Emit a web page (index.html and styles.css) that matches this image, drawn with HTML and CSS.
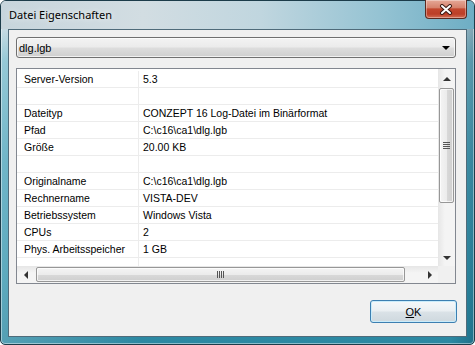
FILE: index.html
```html
<!DOCTYPE html>
<html lang="de">
<head>
  <meta charset="UTF-8">
  <title>Datei Eigenschaften</title>
  <link rel="stylesheet" href="styles.css">
</head>
<body>
  <div class="window">
    <div class="titlebar">
      <span class="title">Datei Eigenschaften</span>
      <button class="close-btn" aria-label="Schließen">
        <svg width="16" height="11" viewBox="0 0 16 11">
          <path d="M4 2 L12 9 M12 2 L4 9" stroke="#3b1a14" stroke-width="4" stroke-linecap="round"/>
          <path d="M4 2 L12 9 M12 2 L4 9" stroke="#fff" stroke-width="2" stroke-linecap="round"/>
        </svg>
      </button>
    </div>

    <div class="client">
      <!-- Auswahl der Datei -->
      <div class="combo">
        <span class="combo-text">dlg.lgb</span>
        <span class="combo-arrow"></span>
      </div>

      <!-- Eigenschaftsliste -->
      <div class="list">
        <div class="rows">
          <div class="row"><div class="cell-label">Server-Version</div><div class="cell-value">5.3</div></div>
          <div class="row"><div class="cell-label"></div><div class="cell-value"></div></div>
          <div class="row"><div class="cell-label">Dateityp</div><div class="cell-value">CONZEPT 16 Log-Datei im Binärformat</div></div>
          <div class="row"><div class="cell-label">Pfad</div><div class="cell-value">C:\c16\ca1\dlg.lgb</div></div>
          <div class="row"><div class="cell-label">Größe</div><div class="cell-value">20.00 KB</div></div>
          <div class="row"><div class="cell-label"></div><div class="cell-value"></div></div>
          <div class="row"><div class="cell-label">Originalname</div><div class="cell-value">C:\c16\ca1\dlg.lgb</div></div>
          <div class="row"><div class="cell-label">Rechnername</div><div class="cell-value">VISTA-DEV</div></div>
          <div class="row"><div class="cell-label">Betriebssystem</div><div class="cell-value">Windows Vista</div></div>
          <div class="row"><div class="cell-label">CPUs</div><div class="cell-value">2</div></div>
          <div class="row"><div class="cell-label">Phys. Arbeitsspeicher</div><div class="cell-value">1 GB</div></div>
          <div class="row"><div class="cell-label"></div><div class="cell-value"></div></div>
        </div>

        <div class="vscroll">
          <div class="sb-btn sb-up"><span class="arrow-up"></span></div>
          <div class="v-thumb"><span class="grip-v"></span></div>
          <div class="sb-track"></div>
          <div class="sb-btn sb-down"><span class="arrow-down"></span></div>
        </div>

        <div class="hscroll">
          <div class="sb-btn sb-left"><span class="arrow-left"></span></div>
          <div class="h-thumb"><span class="grip-h"></span></div>
          <div class="sb-track"></div>
          <div class="sb-btn sb-right"><span class="arrow-right"></span></div>
        </div>

        <div class="corner"></div>
      </div>

      <div class="buttons">
        <button class="ok-btn"><u>O</u>K</button>
      </div>
    </div>
  </div>
</body>
</html>
```

FILE: styles.css
```css
/* Grundwerte */
:root {
  --client-bg: #f0f0f0;
  --grid-line: #ececec;
  --text-color: #000;
  --ui-font: 'Liberation Sans', Arial, sans-serif;
  --title-font: 'Noto Sans', 'Open Sans', sans-serif;
}
* {
  box-sizing: border-box;
}
body {
  margin: 0;
  width: 475px;
  height: 345px;
  overflow: hidden;
  background: #fff;
  font-family: var(--ui-font);
  font-size: 10.5px;
  color: var(--text-color);
}

/* Fensterrahmen (Aero) */
.window {
  width: 475px;
  height: 345px;
  display: flex;
  flex-direction: column;
  border: 1px solid #1c3c4a;
  border-radius: 6px 6px 5px 5px;
  background:
    linear-gradient(90deg, rgba(255,255,255,0.2) 0%, rgba(255,255,255,0) 30%, rgba(0,0,0,0) 95%, rgba(10,70,95,0.35) 100%),
    linear-gradient(180deg, #cad8de 0px, #b9d2dc 28px, #7cbccd 60px, #4ea4bb 160px, #3595ae 280px, #2b87a1 344px);
  box-shadow: inset 0 0 0 1px rgba(255,255,255,0.45);
}
.titlebar {
  height: 28px;
  display: flex;
  align-items: flex-start;
  padding-left: 8px;
  background: linear-gradient(90deg, #c7d5dc 0%, #d2dde2 30%, #c0d6df 55%, #95c3d3 80%, #6eaec4 100%);
  border-radius: 5px 5px 0 0;
}
.title {
  line-height: 28px;
  font-family: var(--title-font);
  font-size: 11px;
  color: #000;
  text-shadow: 0 0 6px rgba(255,255,255,0.9);
}
.close-btn {
  margin-left: auto;
  margin-right: 7px;
  margin-top: -1px;
  width: 42px;
  height: 19px;
  padding: 0;
  border: 1px solid #5b2a20;
  border-top: none;
  border-radius: 0 0 4px 4px;
  background: linear-gradient(180deg, #e5a897 0%, #d6836e 42%, #c2472e 50%, #bc3f27 78%, #d36f55 100%);
  box-shadow: inset 0 0 0 1px rgba(255,255,255,0.35);
  display: flex;
  align-items: center;
  justify-content: center;
}

/* Client-Bereich */
.client {
  flex: 1;
  margin: 0 7px 7px 7px;
  border: 1px solid #4f6b7a;
  background-color: var(--client-bg);
  padding: 7px 10px 0 7px;
  display: flex;
  flex-direction: column;
}

/* Kombinationsfeld */
.combo {
  height: 21px;
  display: flex;
  align-items: center;
  padding-left: 2px;
  border: 1px solid #707070;
  border-radius: 3px;
  background: linear-gradient(180deg, #f3f3f3 0%, #ebebeb 48%, #dddddd 52%, #cfcfcf 100%);
  box-shadow: inset 0 0 0 1px rgba(255,255,255,0.7);
  font-size: 11px;
}
.combo-arrow {
  margin-left: auto;
  margin-right: 5px;
  width: 0;
  height: 0;
  border-left: 4px solid transparent;
  border-right: 4px solid transparent;
  border-top: 4px solid #000;
}

/* Liste */
.list {
  margin-top: 10px;
  height: 216px;
  border: 1px solid #828790;
  background: #fff;
  display: grid;
  grid-template-columns: 1fr 17px;
  grid-template-rows: 1fr 17px;
  overflow: hidden;
}
.rows {
  padding-top: 2px;
  overflow: hidden;
}
.row {
  height: 17px;
  display: flex;
  border-bottom: 1px solid var(--grid-line);
  width: 520px;
}
.cell-label {
  width: 122px;
  flex: none;
  padding-left: 7px;
  border-right: 1px solid var(--grid-line);
  line-height: 17px;
  white-space: nowrap;
}
.cell-value {
  padding-left: 4px;
  line-height: 17px;
  white-space: nowrap;
}

/* Bildlaufleisten */
.vscroll {
  display: flex;
  flex-direction: column;
  background: linear-gradient(90deg, #e6e6e6 0%, #f4f4f4 40%, #f4f4f4 100%);
}
.hscroll {
  display: flex;
  background: linear-gradient(180deg, #e6e6e6 0%, #f4f4f4 40%, #f4f4f4 100%);
}
.corner {
  background: #f0f0f0;
}
.sb-track {
  flex: 1;
}
.sb-btn {
  flex: none;
  display: flex;
  align-items: center;
  justify-content: center;
}
.sb-up { height: 19px; }
.sb-down { height: 17px; }
.sb-left { width: 17px; }
.sb-right { width: 17px; }
.arrow-up, .arrow-down, .arrow-left, .arrow-right {
  width: 0;
  height: 0;
}
.arrow-up {
  border-left: 4px solid transparent;
  border-right: 4px solid transparent;
  border-bottom: 4px solid #333;
}
.arrow-down {
  border-left: 4px solid transparent;
  border-right: 4px solid transparent;
  border-top: 4px solid #333;
}
.arrow-left {
  border-top: 4px solid transparent;
  border-bottom: 4px solid transparent;
  border-right: 4px solid #333;
}
.arrow-right {
  border-top: 4px solid transparent;
  border-bottom: 4px solid transparent;
  border-left: 4px solid #333;
}
.v-thumb {
  height: 115px;
  margin: 0 1px;
  border: 1px solid #979797;
  border-radius: 2px;
  background: linear-gradient(90deg, #f4f4f4 0%, #ececec 50%, #d9d9d9 51%, #cfcfcf 100%);
  box-shadow: inset 0 0 0 1px rgba(255,255,255,0.7);
  display: flex;
  align-items: center;
  justify-content: center;
}
.h-thumb {
  width: 369px;
  margin: 1px 0;
  margin-left: 2px;
  border: 1px solid #979797;
  border-radius: 2px;
  background: linear-gradient(180deg, #f4f4f4 0%, #ececec 50%, #d9d9d9 51%, #cfcfcf 100%);
  box-shadow: inset 0 0 0 1px rgba(255,255,255,0.7);
  display: flex;
  align-items: center;
  justify-content: center;
}
.grip-v {
  width: 7px;
  height: 7px;
  background: repeating-linear-gradient(180deg, #555 0px, #555 1px, transparent 1px, transparent 2px);
}
.grip-h {
  width: 7px;
  height: 7px;
  background: repeating-linear-gradient(90deg, #555 0px, #555 1px, transparent 1px, transparent 2px);
}

/* Schaltflächen */
.buttons {
  margin-top: 16px;
  display: flex;
  justify-content: flex-end;
}
.ok-btn {
  width: 87px;
  height: 23px;
  margin-right: -1px;
  padding: 0;
  border: 1px solid #3c7fb1;
  border-radius: 3px;
  background: linear-gradient(180deg, #f5f8fa 0%, #eaeff2 48%, #dae2e7 52%, #ced8de 100%);
  box-shadow: inset 0 0 0 1px #c9ecfb;
  font-family: var(--ui-font);
  font-size: 11px;
  color: #000;
}
```
